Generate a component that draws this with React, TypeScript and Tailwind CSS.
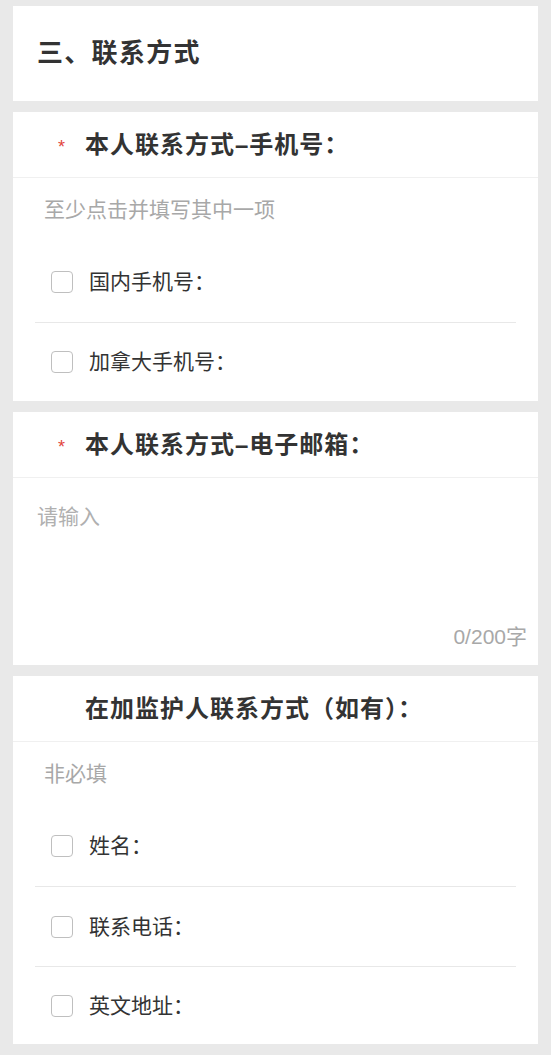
const font = { fontFamily: '"Liberation Sans", "Noto Sans CJK SC", sans-serif' }

function Checkbox() {
  return <span className="w-[22px] h-[22px] shrink-0 rounded-[4px] border border-[#bfbfbf] bg-white" />
}

function Header({ title, required }: { title: string; required?: boolean }) {
  return (
    <div className="h-[66px] flex items-center pl-[45px] border-b border-[#f0f0f0]">
      <span className="w-[27px] text-left text-[18px] text-[#e2453c] mt-[6px]">{required ? '*' : ''}</span>
      <span className="text-[24px] font-bold text-[#333] tracking-[1px]">{title}</span>
    </div>
  )
}

function Options({ items, lastHeight }: { items: string[]; lastHeight: string }) {
  return (
    <div className="mx-[22px]">
      {items.map((item, i) => (
        <div
          key={item}
          className={`flex items-center gap-[16px] pl-[16px] ${i > 0 ? 'border-t border-[#e8e8e8]' : ''} ${
            i === items.length - 1 ? lastHeight : 'h-[80px]'
          }`}
        >
          <Checkbox />
          <span className="text-[21px] text-[#333]">{item}</span>
        </div>
      ))}
    </div>
  )
}

export default function App() {
  return (
    <div className="min-h-screen bg-[#e9e9e9] pt-[6px] pb-[10px] px-[13px] flex flex-col gap-[11px]" style={font}>
      <div className="h-[95px] bg-white flex items-center pl-[24px]">
        <h1 className="text-[26px] font-bold text-[#333] tracking-[1.3px]">三、联系方式</h1>
      </div>

      <div className="bg-white">
        <Header title="本人联系方式–手机号：" required />
        <div className="h-[64px] flex items-center pl-[31px] text-[21px] text-[#a8a8a8]">至少点击并填写其中一项</div>
        <Options items={['国内手机号：', '加拿大手机号：']} lastHeight="h-[79px]" />
      </div>

      <div className="bg-white">
        <Header title="本人联系方式–电子邮箱：" required />
        <div className="h-[187px] flex flex-col justify-between pl-[24px] pr-[11px] pt-[25px] pb-[14px]">
          <textarea
            className="flex-1 resize-none outline-none text-[21px] leading-[28px] text-[#333] placeholder:text-[#b0b0b0]"
            placeholder="请输入"
          />
          <div className="text-right text-[21px] leading-[28px] text-[#a8a8a8]">0/200字</div>
        </div>
      </div>

      <div className="bg-white">
        <Header title="在加监护人联系方式（如有）：" />
        <div className="h-[64px] flex items-center pl-[31px] text-[21px] text-[#a8a8a8]">非必填</div>
        <Options items={['姓名：', '联系电话：', '英文地址：']} lastHeight="h-[78px]" />
      </div>
    </div>
  )
}
